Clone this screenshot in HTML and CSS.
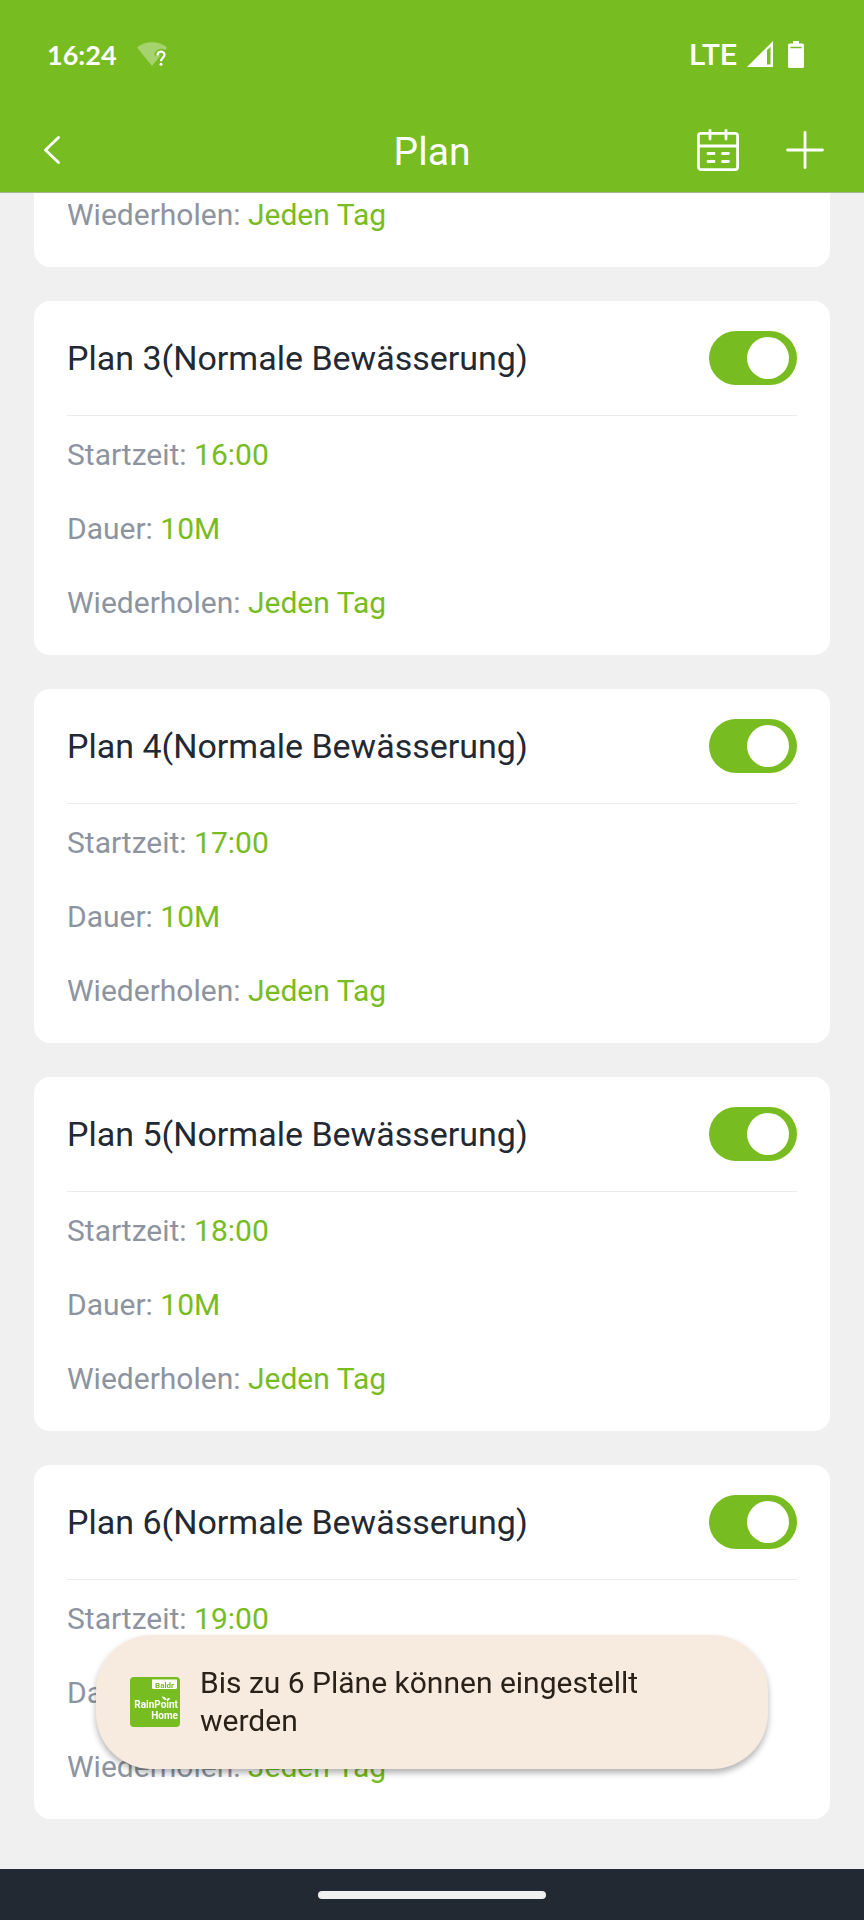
FILE: index.html
```html
<!DOCTYPE html>
<html lang="de">
<head>
<meta charset="UTF-8">
<meta name="viewport" content="width=device-width, initial-scale=1.0">
<title>Plan</title>

<link rel="stylesheet" href="styles.css">

</head>
<body>

<header class="header">
    <!-- Status bar -->
    <div class="status-bar">
        <span class="clock">16:24</span>
        <svg class="wifi" width="30" height="24" viewBox="0 0 30 24">
            <path d="M0 5.500C8-1.500 22-1.500 30 5.500L15 24Z" fill="#fff" fill-opacity="0.35"/>
            <path d="M20.500 13.500C20.500 8.500 27.500 8.500 27.500 12.800C27.500 15.800 24 16 24 19.200" fill="none" stroke="#77bc20" stroke-width="6"/>
            <path d="M20.500 13.500C20.500 8.500 27.500 8.500 27.500 12.800C27.500 15.800 24 16 24 19.200" fill="none" stroke="#fff" stroke-width="2.300"/>
            <circle cx="24" cy="22.200" r="1.500" fill="#fff"/>
        </svg>
        <span class="network">LTE</span>
        <svg class="signal" width="26" height="26" viewBox="0 0 26 26">
            <path d="M26 0V26H0ZM20 9V23.500H23.500V6Z" fill="#fff" fill-rule="evenodd"/>
        </svg>
        <svg class="battery" width="16" height="27" viewBox="0 0 16 27">
            <path d="M5 0H11V2.500H14.500Q16 2.500 16 4V25.500Q16 27 14.500 27H1.500Q0 27 0 25.500V4Q0 2.500 1.500 2.500H5Z" fill="#fff"/>
            <path d="M2.500 6.500H13.500" stroke="#77bc20" stroke-width="1.500"/>
        </svg>
    </div>

    <!-- Title bar -->
    <div class="title-bar">
        <button class="icon-button" type="button" aria-label="Zurück">
            <svg width="24" height="28" viewBox="0 0 24 28">
                <path d="M18.500 1.500L5.500 14L18.500 26.500" fill="none" stroke="#fff" stroke-width="2.800" stroke-linecap="round" stroke-linejoin="round"/>
            </svg>
        </button>
        <h1 class="title">Plan</h1>
        <div class="actions">
            <button class="icon-button" type="button" aria-label="Kalender">
                <svg width="42" height="42" viewBox="0 0 42 42">
                    <g fill="none" stroke="#fff" stroke-width="2.800" stroke-linecap="round">
                        <rect x="1.400" y="4.400" width="39.200" height="36.200" rx="2.500"/>
                        <path d="M1.400 17H40.600M13 1.400V10M29 1.400V10"/>
                        <path d="M11 24.500H17M25.500 24.500H31.500M11 32.500H17M25.500 32.500H31.500"/>
                    </g>
                </svg>
            </button>
            <button class="icon-button" type="button" aria-label="Hinzufügen">
                <svg width="38" height="38" viewBox="0 0 38 38">
                    <path d="M19 1.500V36.500M1.500 19H36.500" fill="none" stroke="#fff" stroke-width="2.800" stroke-linecap="round"/>
                </svg>
            </button>
        </div>
    </div>
</header>

<main class="plans">
    <!-- Plan 2, scrolled under the header -->
    <section class="card card-cut">
        <p class="row">Wiederholen: <span class="value">Jeden Tag</span></p>
    </section>

    <section class="card">
        <div class="card-head">
            <label class="name" for="plan3">Plan 3(Normale Bewässerung)</label>
            <input class="toggle" type="checkbox" id="plan3" checked>
        </div>
        <div class="details">
            <p class="row">Startzeit: <span class="value">16:00</span></p>
            <p class="row">Dauer: <span class="value">10M</span></p>
            <p class="row">Wiederholen: <span class="value">Jeden Tag</span></p>
        </div>
    </section>

    <section class="card">
        <div class="card-head">
            <label class="name" for="plan4">Plan 4(Normale Bewässerung)</label>
            <input class="toggle" type="checkbox" id="plan4" checked>
        </div>
        <div class="details">
            <p class="row">Startzeit: <span class="value">17:00</span></p>
            <p class="row">Dauer: <span class="value">10M</span></p>
            <p class="row">Wiederholen: <span class="value">Jeden Tag</span></p>
        </div>
    </section>

    <section class="card">
        <div class="card-head">
            <label class="name" for="plan5">Plan 5(Normale Bewässerung)</label>
            <input class="toggle" type="checkbox" id="plan5" checked>
        </div>
        <div class="details">
            <p class="row">Startzeit: <span class="value">18:00</span></p>
            <p class="row">Dauer: <span class="value">10M</span></p>
            <p class="row">Wiederholen: <span class="value">Jeden Tag</span></p>
        </div>
    </section>

    <section class="card">
        <div class="card-head">
            <label class="name" for="plan6">Plan 6(Normale Bewässerung)</label>
            <input class="toggle" type="checkbox" id="plan6" checked>
        </div>
        <div class="details">
            <p class="row">Startzeit: <span class="value">19:00</span></p>
            <p class="row">Dauer: <span class="value">10M</span></p>
            <p class="row">Wiederholen: <span class="value">Jeden Tag</span></p>
        </div>
    </section>
</main>

<!-- Toast message -->
<div class="toast" role="status">
    <svg class="app-icon" width="50" height="50" viewBox="0 0 50 50">
        <rect width="50" height="50" rx="4" fill="#77bc20"/>
        <path d="M22 2.500H47V10.500Q47 12 45.500 12H23.500Q22 12 22 10.500Z" fill="#fff"/>
        <text class="logo-brand" x="34.500" y="10.500" text-anchor="middle">Baldr</text>
        <text class="logo-name" x="48" y="31" text-anchor="end">RainPoint</text>
        <text class="logo-name" x="48" y="42" text-anchor="end">Home</text>
        <path d="M32 19.500Q36 19.500 36.500 23Q32.500 23 32 19.500ZM36.500 23Q37 20.500 40 21Q39.500 24 36.500 23Z" fill="#fff"/>
    </svg>
    <p class="toast-text">Bis zu 6 Pläne können eingestellt werden</p>
</div>

<footer class="nav-bar">
    <div class="handle"></div>
</footer>

</body>
</html>
```

FILE: styles.css
```css
* {
    box-sizing: border-box;
}

body {
    margin: 0;
    min-height: 100vh;
    display: flex;
    flex-direction: column;
    background-color: #f0f0f0;
    font-family: Roboto, "Liberation Sans", sans-serif;
}

h1, p {
    margin: 0;
}

svg {
    display: block;
}

/* Header */
.header {
    background-color: #77bc20;
    border-bottom: 1px solid #a3b98c;
    color: #ffffff;
}

.status-bar {
    display: flex;
    align-items: center;
    height: 108px;
    padding: 0 60px 0 47px;
}

.clock {
    font-family: Lato, sans-serif;
    font-size: 27px;
    font-weight: bold;
}

.wifi {
    margin-left: 20px;
}

.network {
    margin-left: auto;
    font-size: 30px;
    font-weight: 500;
}

.signal {
    margin-left: 10px;
}

.battery {
    margin-left: 15px;
}

.title-bar {
    display: grid;
    grid-template-columns: 1fr auto 1fr;
    align-items: center;
    height: 84px;
    padding: 0 40px;
}

.title {
    padding-top: 4px;
    font-size: 39px;
    font-weight: normal;
}

.actions {
    display: flex;
    align-items: center;
    justify-content: flex-end;
    gap: 47px;
}

.icon-button {
    justify-self: start;
    padding: 0;
    border: none;
    background: transparent;
    cursor: pointer;
}

/* Plan cards */
.plans {
    display: flex;
    flex-direction: column;
    gap: 34px;
    padding: 0 34px 50px;
}

.card {
    padding: 0 33px 35px;
    border-radius: 16px;
    background-color: #ffffff;
}

.card-cut {
    padding-top: 5px;
    border-radius: 0 0 16px 16px;
}

.card-head {
    display: flex;
    align-items: center;
    justify-content: space-between;
    height: 115px;
    border-bottom: 1px solid #ebebeb;
}

.name {
    font-size: 34px;
    color: #222933;
}

.details {
    display: flex;
    flex-direction: column;
    gap: 40px;
    padding-top: 22px;
}

.row {
    font-size: 30px;
    line-height: 34px;
    color: #8d949f;
}

.value {
    color: #77bc20;
}

/* On/off switch */
.toggle {
    appearance: none;
    display: flex;
    align-items: center;
    width: 88px;
    height: 54px;
    margin: 0;
    padding: 0 8px;
    border-radius: 27px;
    background-color: #cccccc;
    cursor: pointer;
}

.toggle::before {
    content: "";
    width: 42px;
    height: 42px;
    border-radius: 50%;
    background-color: #ffffff;
}

.toggle:checked {
    justify-content: flex-end;
    background-color: #77bc20;
}

/* Toast, floats over the cards */
.toast {
    position: fixed;
    left: 96px;
    right: 96px;
    bottom: 151px;
    display: flex;
    align-items: center;
    gap: 20px;
    padding: 29px 96px 29px 34px;
    border-radius: 56px;
    background-color: #f7ebdf;
    box-shadow: 0 4px 6px rgba(0, 0, 0, 0.3);
}

.app-icon {
    flex-shrink: 0;
}

.logo-brand,
.logo-name {
    font-family: Roboto, sans-serif;
    font-weight: bold;
}

.logo-brand {
    font-size: 8px;
    fill: #77bc20;
}

.logo-name {
    font-size: 10px;
    fill: #ffffff;
}

.toast-text {
    font-size: 30px;
    line-height: 38px;
    color: #2a2119;
}

/* Gesture bar */
.nav-bar {
    display: flex;
    justify-content: center;
    align-items: center;
    height: 51px;
    margin-top: auto;
    background-color: #222933;
}

.handle {
    width: 228px;
    height: 8px;
    border-radius: 4px;
    background-color: #f0f0f0;
}
```
